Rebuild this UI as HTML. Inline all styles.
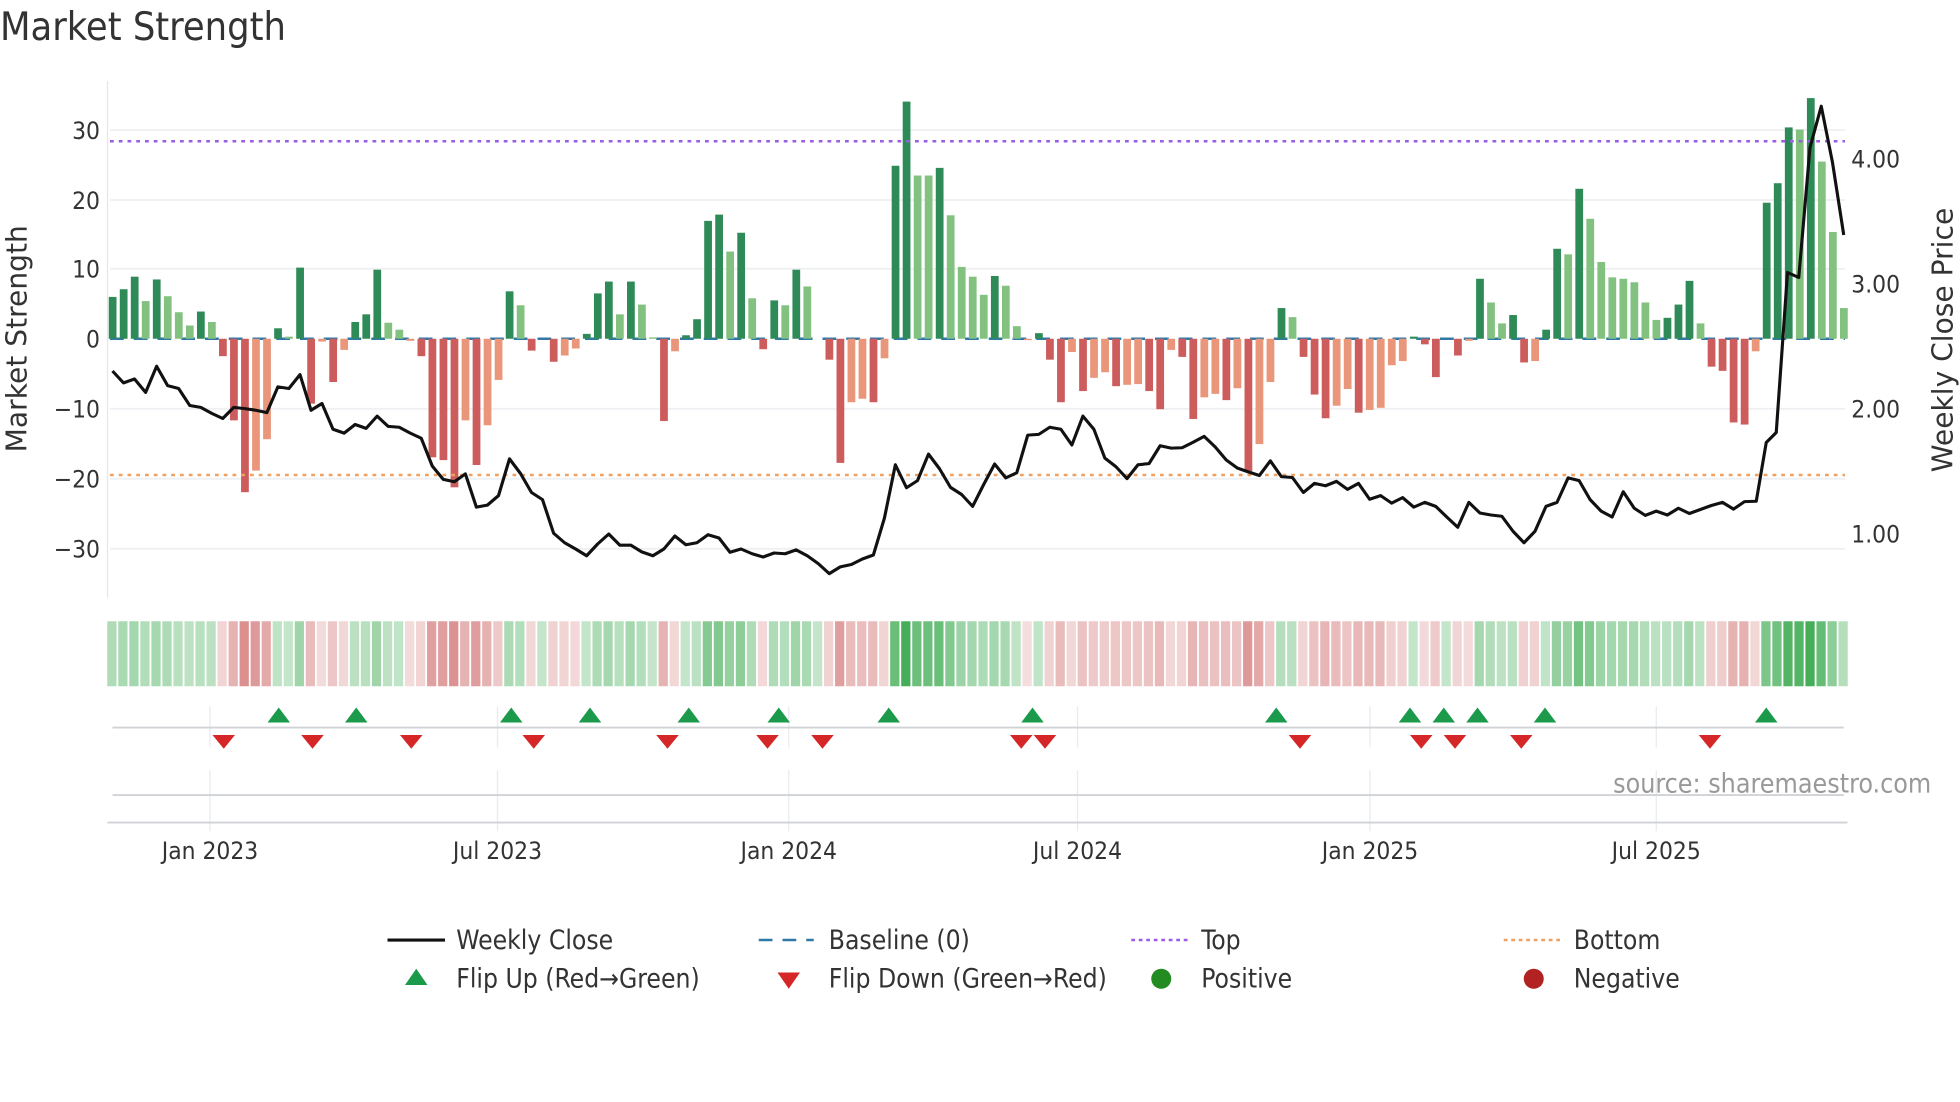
<!DOCTYPE html>
<html><head><meta charset="utf-8">
<style>
html,body{margin:0;padding:0;background:#fff;}
svg{display:block}
text{font-family:"DejaVu Sans Condensed","DejaVu Sans","Liberation Sans",sans-serif;fill:#333}
.tk{font-size:19.5px}
.lg{font-size:21px}
</style></head><body>
<svg id="c" width="1960" height="1102" viewBox="0 0 1568 881.6" xmlns="http://www.w3.org/2000/svg">
<text x="0" y="32" style="font-size:31.5px">Market Strength</text>
<g id="grid" stroke="#eef0f3" stroke-width="1.5"></g>
<line x1="86" y1="65" x2="86" y2="478" stroke="#e6e6e6" stroke-width="1"/>
<g class="tk" text-anchor="end">
<text x="80" y="111">30</text><text x="80" y="167">20</text><text x="80" y="222">10</text>
<text x="80" y="278">0</text><text x="80" y="334">−10</text><text x="80" y="390">−20</text><text x="80" y="446">−30</text>
</g>
<g class="tk">
<text x="1481" y="134">4.00</text><text x="1481" y="234">3.00</text><text x="1481" y="334">2.00</text><text x="1481" y="434">1.00</text>
</g>
<text transform="translate(21,271) rotate(-90)" text-anchor="middle" style="font-family:'DejaVu Sans',sans-serif;font-size:22.5px">Market Strength</text>
<text transform="translate(1562,272) rotate(-90)" text-anchor="middle" style="font-family:'DejaVu Sans',sans-serif;font-size:22.5px">Weekly Close Price</text>
<line x1="88" y1="271" x2="1476" y2="271" stroke="#2f78a8" stroke-width="2" stroke-dasharray="11,8"/>
<g id="bars"></g>
<line x1="88" y1="113" x2="1476" y2="113" stroke="#9b5de5" stroke-width="2" stroke-dasharray="3,4"/>
<line x1="88" y1="380" x2="1476" y2="380" stroke="#f0a060" stroke-width="2" stroke-dasharray="3,4"/>
<polyline id="price" fill="none" stroke="#111" stroke-width="2.5" stroke-linejoin="round"/>
<g id="strip"></g>
<g id="vg" stroke="#e8ebef" stroke-width="1"></g>
<line x1="90" y1="582" x2="1475" y2="582" stroke="#d0d3d6" stroke-width="1.5"/>
<line x1="90" y1="636" x2="1475" y2="636" stroke="#d0d3d6" stroke-width="1.5"/>
<line x1="86" y1="658" x2="1478" y2="658" stroke="#d0d3d6" stroke-width="1.5"/>
<g id="flips"></g>
<g class="tk" text-anchor="middle">
<text x="168" y="687">Jan 2023</text><text x="398" y="687">Jul 2023</text><text x="631" y="687">Jan 2024</text>
<text x="862" y="687">Jul 2024</text><text x="1096" y="687">Jan 2025</text><text x="1325" y="687">Jul 2025</text>
</g>
<text x="1545" y="634" text-anchor="end" style="font-size:21.3px;fill:#999">source: sharemaestro.com</text>
<g class="lg">
<line x1="310" y1="752" x2="356" y2="752" stroke="#111" stroke-width="2.5"/>
<text x="365" y="759">Weekly Close</text>
<line x1="607" y1="752" x2="651" y2="752" stroke="#2f78a8" stroke-width="2" stroke-dasharray="11,8"/>
<text x="663" y="759">Baseline (0)</text>
<line x1="905" y1="752" x2="950" y2="752" stroke="#9b5de5" stroke-width="2" stroke-dasharray="3,3"/>
<text x="961" y="759">Top</text>
<line x1="1203" y1="752" x2="1248" y2="752" stroke="#f0a060" stroke-width="2" stroke-dasharray="3,3"/>
<text x="1259" y="759">Bottom</text>
<polygon points="324,788 342,788 333,775" fill="#1a9a4a"/>
<text x="365" y="790">Flip Up (Red→Green)</text>
<polygon points="622,778 640,778 631,791" fill="#d62728"/>
<text x="663" y="790">Flip Down (Green→Red)</text>
<circle cx="929" cy="783" r="8" fill="#228b22"/>
<text x="961" y="790">Positive</text>
<circle cx="1227" cy="783" r="8" fill="#b22222"/>
<text x="1259" y="790">Negative</text>
</g>
</svg>
<script>
var NS="http://www.w3.org/2000/svg";
function el(t,a,p){var e=document.createElementNS(NS,t);for(var k in a)e.setAttribute(k,a[k]);document.getElementById(p).appendChild(e);return e;}
[104,160,215,327,383,439].forEach(function(y){el("line",{x1:88,x2:1476,y1:y,y2:y},"grid");});
[168,398,631,862,1096,1325].forEach(function(x){el("line",{x1:x,x2:x,y1:565,y2:598},"vg");el("line",{x1:x,x2:x,y1:616,y2:665},"vg");});
var B="6D 7.1D 8.9D 5.4L 8.5D 6.1L 3.8L 1.9L 3.9D 2.4L -2.5D -11.7D -22D -18.9L -14.4L 1.5D 0.3L 10.2D -9.3D -0.4L -6.2D -1.6L 2.4D 3.5D 9.9D 2.3L 1.3L -0.3L -2.5D -17D -17.4D -21.3D -11.7L -18.1D -12.4L -5.9L 6.8D 4.8L -1.7D 0L -3.3D -2.4L -1.4L 0.7D 6.5D 8.2D 3.5L 8.2D 4.9L 0.2L -11.8D -1.8L 0.5D 2.8D 16.9D 17.8D 12.5L 15.2D 5.8L -1.5D 5.5D 4.8L 9.9D 7.5L 0L -3D -17.8D -9.1L -8.6L -9.1D -2.8L 24.8D 34D 23.4L 23.4L 24.5D 17.7L 10.3L 8.9L 6.3L "+
"9D 7.6L 1.8L -0.2L 0.8D -3D -9.1D -1.9L -7.5D -5.6L -4.8L -6.8D -6.6L -6.5L -7.5D -10.1D -1.6L -2.6D -11.5D -8.4L -7.9L -8.8D -7.1L -19D -15.1L -6.2L 4.4D 3.1L -2.6D -8D -11.4D -9.6L -7.2L -10.6D -10.2L -9.9L -3.8L -3.2L 0.3D -0.8D -5.5D 0L -2.4D -0.3L 8.6D 5.2L 2.2L 3.4D -3.4D -3.2L 1.3D 12.9D 12.1L 21.5D 17.2L 11L 8.8L 8.6L 8.1L 5.2L 2.7L 3D 4.9D 8.3D 2.2L -4D -4.6D -12D -12.3D -1.8L 19.5D 22.3D 30.3D 30L 34.5D 25.4L 15.3L 4.4L";
var bars=B.split(" ").map(function(s){return {v:parseFloat(s),t:s.slice(-1)};});
var sp=(1475-90)/(bars.length-1);
bars.forEach(function(b,i){
  var x=90+i*sp, y0=271, h=b.v*5.58;
  var col=b.v>=0?(b.t=="D"?"#2e8b57":"#82c17f"):(b.t=="D"?"#cd5c5c":"#e9967a");
  if(Math.abs(h)>0.3) el("rect",{x:x-3,y:h>0?y0-h:y0,width:6.2,height:Math.abs(h),fill:col},"bars");
  var sc=b.v>=0?"rgba(60,170,80,"+(0.3+Math.min(b.v,34)/34*0.65).toFixed(2)+")":"rgba(205,100,100,"+(0.22+Math.min(-b.v,22)/22*0.5).toFixed(2)+")";
  el("rect",{x:x-4.2,y:497,width:7.4,height:52,fill:sc},"strip");
});
var P1=[938,968,958,992,926,975,982,1025,1030,1045,1058,1030,1033,1037,1043,978,982,947,1037,1020,1085,1095,1073,1083,1052,1078,1080,1095,1108,1178,1212,1218,1198,1282,1277,1253,1160,1197,1245,1263,1348,1372,1388,1405,1375,1350,1378,1378,1395,1405,1388,1355,1377,1372,1352,1360,1396,1388,1400,1408,1398,1400,1390,1405,1425,1450,1433,1427,1413,1403,1310,1175,1233,1215,1148,1185,1232,1250,1280];
var P2=[1225,1173,1208,1195,1100,1098,1080,1085,1125,1052,1085,1158,1180,1210,1175,1172,1127,1133,1132,1118,1103,1130,1163,1183,1193,1202,1165,1205,1207,1245,1222,1228,1217,1237,1222,1262,1253,1272,1258,1282,1270,1280,1307,1333,1270,1297,1302,1305,1343,1372,1343,1280,1270,1208,1215,1263,1292,1307,1243,1285,1303,1292,1302,1285,1298,1288,1278,1270,1287,1268,1120,1095,855,878,578,268,405,595];
var P=P1.concat(P2), pts=[];
P.forEach(function(y,i){pts.push([90+i*sp,y/3.16]);});
var tail=[[1405,401],[1413,354],[1421,346],[1430,218],[1439,222],[1448,118],[1457,85],[1466,130],[1475,188]];
pts=pts.filter(function(p){return p[0]<1402;}).concat(tail);
document.getElementById("price").setAttribute("points",pts.map(function(p){return p[0].toFixed(1)+","+p[1].toFixed(1);}).join(" "));
[223,285,409,472,551,623,711,826,1021,1128,1155,1182,1236,1413].forEach(function(x){el("polygon",{points:(x-9)+",578 "+(x+9)+",578 "+x+",566",fill:"#1a9a4a"},"flips");});
[179,250,329,427,534,614,658,817,836,1040,1137,1164,1217,1368].forEach(function(x){el("polygon",{points:(x-9)+",588 "+(x+9)+",588 "+x+",599",fill:"#d62728"},"flips");});
</script>
</body></html>
